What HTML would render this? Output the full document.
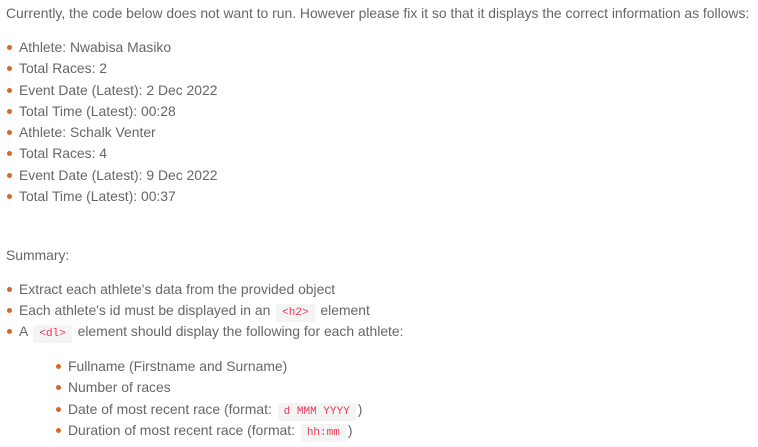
<!DOCTYPE html>
<html><head><meta charset="utf-8"><style>
body{margin:0;width:758px;height:447px;background:#fff;font-family:"Liberation Sans",sans-serif;font-size:13.9px;color:#666;position:relative;overflow:hidden}
.l{position:absolute;white-space:nowrap;line-height:16px}
.b::before{content:"";position:absolute;left:-12px;top:6px;width:5px;height:5px;border-radius:50%;background:#d2692c}
code{font-family:"Liberation Mono",monospace;font-size:11px;color:#e8385a;background:#f4f4f4;padding:3px 6px;margin:0 2px;border-radius:2px}
</style></head><body>
<div class="l" style="left:6px;top:5px">Currently, the code below does not want to run. However please fix it so that it displays the correct information as follows:</div>
<div class="l b" style="left:19px;top:39px">Athlete: Nwabisa Masiko</div>
<div class="l b" style="left:19px;top:60px">Total Races: 2</div>
<div class="l b" style="left:19px;top:82px">Event Date (Latest): 2 Dec 2022</div>
<div class="l b" style="left:19px;top:103px">Total Time (Latest): 00:28</div>
<div class="l b" style="left:19px;top:124px">Athlete: Schalk Venter</div>
<div class="l b" style="left:19px;top:145px">Total Races: 4</div>
<div class="l b" style="left:19px;top:167px">Event Date (Latest): 9 Dec 2022</div>
<div class="l b" style="left:19px;top:188px">Total Time (Latest): 00:37</div>
<div class="l" style="left:6px;top:247px">Summary:</div>
<div class="l b" style="left:19px;top:281px">Extract each athlete's data from the provided object</div>
<div class="l b" style="left:19px;top:302px">Each athlete's id must be displayed in an <code>&lt;h2&gt;</code> element</div>
<div class="l b" style="left:19px;top:323px">A <code>&lt;dl&gt;</code> element should display the following for each athlete:</div>
<div class="l b" style="left:68px;top:358px">Fullname (Firstname and Surname)</div>
<div class="l b" style="left:68px;top:379px">Number of races</div>
<div class="l b" style="left:68px;top:401px">Date of most recent race (format: <code>d MMM YYYY</code>)</div>
<div class="l b" style="left:68px;top:422px">Duration of most recent race (format: <code>hh:mm</code>)</div>
</body></html>
